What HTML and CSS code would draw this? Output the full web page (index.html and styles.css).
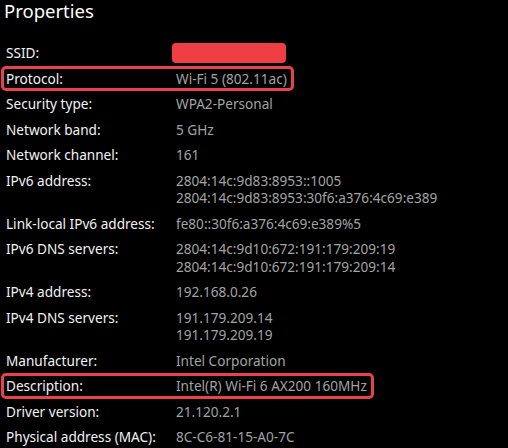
FILE: index.html
```html
<!DOCTYPE html>
<html lang="en">
<head>
<meta charset="utf-8">
<title>Properties</title>
<link rel="stylesheet" href="styles.css">
</head>
<body>
<main class="panel">
  <h1 class="title">Properties</h1>
  <dl class="props">
    <div class="row"><dt>SSID:</dt><dd><span class="redact"></span></dd></div>
    <div class="row boxed"><dt>Protocol:</dt><dd>Wi-Fi 5 (802.11ac)</dd></div>
    <div class="row"><dt>Security type:</dt><dd>WPA2-Personal</dd></div>
    <div class="row"><dt>Network band:</dt><dd>5 GHz</dd></div>
    <div class="row"><dt>Network channel:</dt><dd>161</dd></div>
    <div class="row"><dt>IPv6 address:</dt><dd>2804:14c:9d83:8953::1005<br>2804:14c:9d83:8953:30f6:a376:4c69:e389</dd></div>
    <div class="row"><dt>Link-local IPv6 address:</dt><dd>fe80::30f6:a376:4c69:e389%5</dd></div>
    <div class="row"><dt>IPv6 DNS servers:</dt><dd>2804:14c:9d10:672:191:179:209:19<br>2804:14c:9d10:672:191:179:209:14</dd></div>
    <div class="row"><dt>IPv4 address:</dt><dd>192.168.0.26</dd></div>
    <div class="row"><dt>IPv4 DNS servers:</dt><dd>191.179.209.14<br>191.179.209.19</dd></div>
    <div class="row"><dt>Manufacturer:</dt><dd>Intel Corporation</dd></div>
    <div class="row boxed"><dt>Description:</dt><dd>Intel(R) Wi-Fi 6 AX200 160MHz</dd></div>
    <div class="row"><dt>Driver version:</dt><dd>21.120.2.1</dd></div>
    <div class="row"><dt>Physical address (MAC):</dt><dd>8C-C6-81-15-A0-7C</dd></div>
  </dl>
</main>
</body>
</html>
```
FILE: styles.css
```css
html, body {
  margin: 0;
  padding: 0;
  background: #000;
}
body {
  font-family: "Noto Sans", "Open Sans", sans-serif;
  color: #fff;
}
.panel {
  padding: 0 0 0 6px;
}
.title {
  margin: 0 0 0 -2px;
  font-size: 18.5px;
  font-weight: 400;
  line-height: 22px;
  color: #fff;
}
.props {
  margin: 22px 0 0 0;
  display: flex;
  flex-direction: column;
  align-items: flex-start;
  gap: 8px;
  font-size: 13.6px;
  line-height: 17.5px;
}
.row {
  display: grid;
  grid-template-columns: 170px auto;
}
.row dt {
  margin: 0;
  color: #f2f2f2;
}
.row dd {
  margin: 0;
  color: #a3a3a3;
  white-space: nowrap;
}
.boxed {
  border: 3px solid #e8434b;
  border-radius: 5px;
  padding: 1px 4px 1px 2px;
  margin: -4px 0 -4px -5px;
}
.redact {
  display: block;
  width: 114px;
  height: 20px;
  margin: -1px 0 -1.5px -4px;
  background: #ef3f45;
  border-radius: 4px;
}
```
